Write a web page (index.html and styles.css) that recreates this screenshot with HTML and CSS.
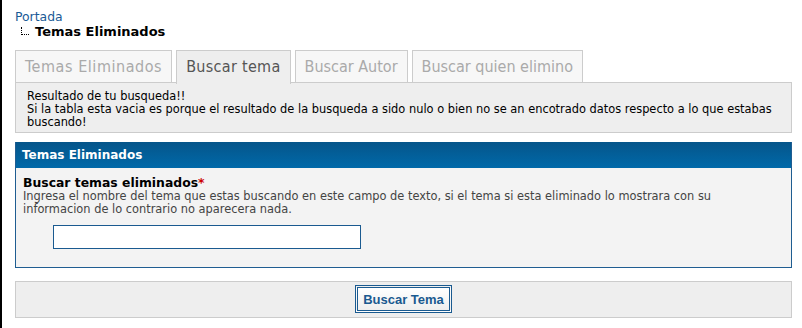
FILE: index.html
```html
<!DOCTYPE html>
<html lang="es">

<head>
    <meta charset="UTF-8">
    <title>Temas Eliminados</title>
    <link rel="stylesheet" href="styles.css">
</head>

<body>
    <div class="navegacion">
        <a href="#" class="portada">Portada</a>
        <div class="actual">
            <span class="rama"></span>
            <strong>Temas Eliminados</strong>
        </div>
    </div>

    <ul class="pestanas">
        <li class="ancha"><a href="#">Temas Eliminados</a></li>
        <li class="activa"><a href="#">Buscar tema</a></li>
        <li><a href="#">Buscar Autor</a></li>
        <li><a href="#">Buscar quien elimino</a></li>
    </ul>

    <div class="aviso">
        Resultado de tu busqueda!!<br>
        Si la tabla esta vacia es porque el resultado de la busqueda a sido nulo o bien no se an encotrado datos respecto a lo que estabas buscando!
    </div>

<form method="post" action="#">
    <div class="caja">
        <div class="caja-titulo">Temas Eliminados</div>
        <div class="caja-cuerpo">
            <label for="tema" class="campo">Buscar temas eliminados<span class="req">*</span></label>
            <p class="ayuda">Ingresa el nombre del tema que estas buscando en este campo de texto, si el tema si esta eliminado lo mostrara con su informacion de lo contrario no aparecera nada.</p>
            <input type="text" id="tema" name="tema" class="texto">
        </div>
    </div>

    <div class="acciones">
        <input type="submit" value="Buscar Tema" class="boton">
    </div>
</form>
</body>

</html>
```

FILE: styles.css
```css
html,
body {
    height: 100%;
}

body {
    margin: 0;
    border-left: 2px solid #000;
    padding: 9px 10px 0 13px;
    box-sizing: border-box;
    font-family: Verdana, 'DejaVu Sans', sans-serif;
    font-size: 11.4px;
    color: #000;
    background-color: #fff;
}

.navegacion {
    height: 41px;
}

.portada {
    display: block;
    font-size: 12.4px;
    color: #1a5a96;
    text-decoration: none;
    line-height: 15px;
}

.actual {
    display: flex;
    align-items: flex-end;
    margin-left: 6px;
}

.rama {
    width: 7px;
    height: 7px;
    border-left: 1px dotted #000;
    border-bottom: 1px dotted #000;
    margin-right: 6px;
    margin-bottom: 4px;
}

.actual strong {
    font-size: 13px;
    line-height: 15px;
}

.pestanas {
    list-style: none;
    margin: 0;
    padding: 0;
    display: flex;
    gap: 4px;
    height: 32px;
}

.pestanas li {
    border: 1px solid #ccc;
    border-bottom: none;
    background-color: #f7f7f7;
}

.pestanas a {
    display: block;
    padding: 0 9px;
    line-height: 31px;
    font-family: 'DejaVu Sans Condensed', 'DejaVu Sans', sans-serif;
    font-size: 16px;
    color: #aaa;
    text-decoration: none;
}

.pestanas .ancha a {
    letter-spacing: 0.55px;
}

.pestanas .activa {
    background-color: #eee;
    height: 33px;
}

.pestanas .activa a {
    color: #555;
    letter-spacing: 0.3px;
}

.aviso {
    background-color: #eee;
    border: 1px solid #ccc;
    padding: 7px 11px 3px;
    line-height: 13px;
}

.caja {
    margin-top: 9px;
    border: 1px solid #1f5d91;
    border-top: none;
    background-color: #f3f3f3;
}

.caja-titulo {
    background: linear-gradient(#05558a, #0069a9);
    color: #fff;
    font-weight: bold;
    font-size: 12px;
    line-height: 26px;
    padding: 0 6px;
}

.caja-cuerpo {
    padding: 7px 7px 18px;
}

.campo {
    display: block;
    font-weight: bold;
    font-size: 12.4px;
    line-height: 15px;
}

.req {
    color: #c00;
}

.ayuda {
    margin: 0 30px 9px 0;
    color: #444;
    line-height: 13px;
}

.texto {
    display: block;
    margin-left: 30px;
    width: 308px;
    height: 24px;
    box-sizing: border-box;
    border: 1px solid #1a5a90;
    background-color: #fff;
}

.acciones {
    margin-top: 13px;
    background-color: #eee;
    border: 1px solid #ccc;
    padding: 3px 0 4px;
    text-align: center;
}

.boton {
    font-family: 'Liberation Sans', Arial, sans-serif;
    font-weight: bold;
    font-size: 13px;
    color: #1a5a90;
    border: 3px double #1a5a90;
    background: linear-gradient(#fff, #eee);
    height: 28px;
    padding: 0 5px;
    cursor: pointer;
}
```
